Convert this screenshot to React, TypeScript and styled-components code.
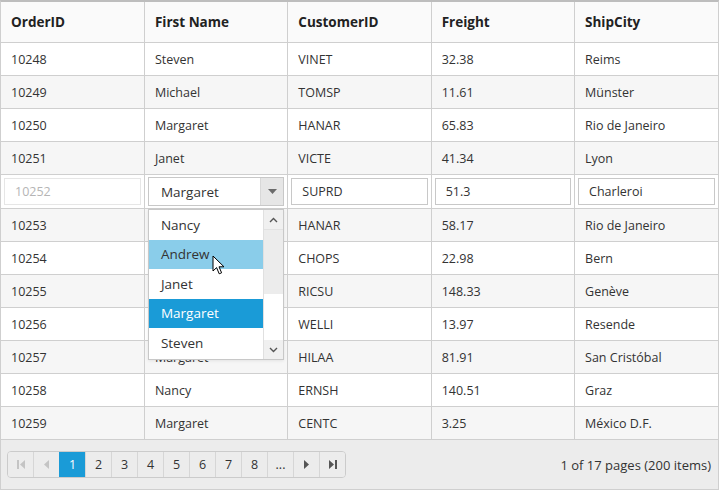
import React from "react";
import styled, { createGlobalStyle } from "styled-components";

interface Order {
  id: number;
  name: string;
  customer: string;
  freight: string;
  city: string;
}

const orders: Order[] = [
  { id: 10248, name: "Steven", customer: "VINET", freight: "32.38", city: "Reims" },
  { id: 10249, name: "Michael", customer: "TOMSP", freight: "11.61", city: "Münster" },
  { id: 10250, name: "Margaret", customer: "HANAR", freight: "65.83", city: "Rio de Janeiro" },
  { id: 10251, name: "Janet", customer: "VICTE", freight: "41.34", city: "Lyon" },
  { id: 10252, name: "Margaret", customer: "SUPRD", freight: "51.3", city: "Charleroi" },
  { id: 10253, name: "Janet", customer: "HANAR", freight: "58.17", city: "Rio de Janeiro" },
  { id: 10254, name: "Steven", customer: "CHOPS", freight: "22.98", city: "Bern" },
  { id: 10255, name: "Anne", customer: "RICSU", freight: "148.33", city: "Genève" },
  { id: 10256, name: "Janet", customer: "WELLI", freight: "13.97", city: "Resende" },
  { id: 10257, name: "Margaret", customer: "HILAA", freight: "81.91", city: "San Cristóbal" },
  { id: 10258, name: "Nancy", customer: "ERNSH", freight: "140.51", city: "Graz" },
  { id: 10259, name: "Margaret", customer: "CENTC", freight: "3.25", city: "México D.F." },
];

const employees = ["Nancy", "Andrew", "Janet", "Margaret", "Steven"];
const EDIT_ID = 10252;

const GlobalStyle = createGlobalStyle`
  body {
    margin: 0;
    background: #fff;
    font-family: "Open Sans", "Noto Sans", sans-serif;
  }
`;

export default function App() {
  return (
    <>
      <GlobalStyle />
      <Grid>
        <Table>
          <thead>
            <tr>
              <Th>OrderID</Th>
              <Th>First Name</Th>
              <Th>CustomerID</Th>
              <Th>Freight</Th>
              <Th>ShipCity</Th>
            </tr>
          </thead>
          <tbody>
            {orders.map((o, i) =>
              o.id === EDIT_ID ? (
                <EditRow key={o.id}>
                  <EditCell>
                    <TextBox $disabled>{o.id}</TextBox>
                  </EditCell>
                  <EditCell>
                    <DropWrap>
                      <DropBox>
                        <DropText>{o.name}</DropText>
                        <DropArrow>
                          <svg width="9" height="5" viewBox="0 0 9 5">
                            <path d="M0 0h9L4.5 5z" fill="#6b6b6b" />
                          </svg>
                        </DropArrow>
                      </DropBox>
                      <Popup>
                        <List>
                          {employees.map((e) => (
                            <Item
                              key={e}
                              $hover={e === "Andrew"}
                              $selected={e === "Margaret"}
                            >
                              {e}
                            </Item>
                          ))}
                        </List>
                        <ScrollBar>
                          <ScrollBtn>
                            <svg width="9" height="6" viewBox="0 0 9 6">
                              <path d="M1 5l3.5-3.5L8 5" stroke="#555" strokeWidth="1.4" fill="none" />
                            </svg>
                          </ScrollBtn>
                          <Thumb />
                          <Track />
                          <ScrollBtn>
                            <svg width="9" height="6" viewBox="0 0 9 6">
                              <path d="M1 1l3.5 3.5L8 1" stroke="#555" strokeWidth="1.4" fill="none" />
                            </svg>
                          </ScrollBtn>
                        </ScrollBar>
                        <Cursor width="14" height="21" viewBox="0 0 14 21">
                          <path
                            d="M1 1v15l3.6-3.4 2.6 6.2 2.4-1-2.6-6h5z"
                            fill="#fff"
                            stroke="#000"
                            strokeWidth="1"
                            strokeLinejoin="round"
                          />
                        </Cursor>
                      </Popup>
                    </DropWrap>
                  </EditCell>
                  <EditCell>
                    <TextBox>{o.customer}</TextBox>
                  </EditCell>
                  <EditCell>
                    <TextBox>{o.freight}</TextBox>
                  </EditCell>
                  <EditCell>
                    <TextBox>{o.city}</TextBox>
                  </EditCell>
                </EditRow>
              ) : (
                <Row key={o.id} $alt={i % 2 === 1}>
                  <Td>{o.id}</Td>
                  <Td>{o.name}</Td>
                  <Td>{o.customer}</Td>
                  <Td>{o.freight}</Td>
                  <Td>{o.city}</Td>
                </Row>
              )
            )}
          </tbody>
        </Table>
        <PagerBar>
          <Pager>
            <PageBtn $muted>
              <svg width="8" height="9" viewBox="0 0 8 9">
                <path d="M0 0h2v9H0zM8 0v9L3 4.5z" fill="#c4c4c4" />
              </svg>
            </PageBtn>
            <PageBtn $muted>
              <svg width="5" height="9" viewBox="0 0 5 9">
                <path d="M5 0v9L0 4.5z" fill="#c4c4c4" />
              </svg>
            </PageBtn>
            {["1", "2", "3", "4", "5", "6", "7", "8", "..."].map((p) => (
              <PageBtn key={p} $active={p === "1"}>
                {p}
              </PageBtn>
            ))}
            <PageBtn>
              <svg width="5" height="9" viewBox="0 0 5 9">
                <path d="M0 0v9l5-4.5z" fill="#555" />
              </svg>
            </PageBtn>
            <PageBtn>
              <svg width="8" height="9" viewBox="0 0 8 9">
                <path d="M0 0v9l5-4.5zM6 0h2v9H6z" fill="#555" />
              </svg>
            </PageBtn>
          </Pager>
          <PageInfo>1 of 17 pages (200 items)</PageInfo>
        </PagerBar>
      </Grid>
    </>
  );
}

const Grid = styled.div`
  width: 719px;
  box-sizing: border-box;
  border: 1px solid #cfcfcf;
  border-top: 2px solid #bdbdbd;
  color: #333;
`;

const Table = styled.table`
  width: 100%;
  table-layout: fixed;
  border-collapse: collapse;
`;

const Th = styled.th`
  height: 40px;
  padding: 0 10px;
  text-align: left;
  font-size: 13.5px;
  font-weight: 700;
  color: #222;
  background: #fafafa;
  border-left: 1px solid #cfcfcf;
  border-bottom: 1px solid #cfcfcf;
  &:first-child {
    border-left: none;
  }
`;

const Row = styled.tr<{ $alt?: boolean }>`
  background: ${(p) => (p.$alt ? "#f6f6f6" : "#fff")};
`;

const Td = styled.td`
  height: 32px;
  padding: 0 10px;
  font-size: 12.5px;
  color: #333;
  border-left: 1px solid #cfcfcf;
  border-bottom: 1px solid #cfcfcf;
  white-space: nowrap;
  overflow: hidden;
  &:first-child {
    border-left: none;
  }
`;

const EditRow = styled.tr`
  background: #fff;
`;

const EditCell = styled.td`
  height: 33px;
  padding: 0 3px;
  border-left: 1px solid #cfcfcf;
  border-bottom: 1px solid #cfcfcf;
  &:first-child {
    border-left: none;
  }
`;

const TextBox = styled.div<{ $disabled?: boolean }>`
  height: 27px;
  box-sizing: border-box;
  border: 1px solid ${(p) => (p.$disabled ? "#e6e6e6" : "#c8c8c8")};
  display: flex;
  align-items: center;
  padding: 0 10px;
  font-size: 12.5px;
  color: ${(p) => (p.$disabled ? "#b5b5b5" : "#333")};
  background: #fff;
`;

const DropWrap = styled.div`
  position: relative;
`;

const DropBox = styled.div`
  height: 29px;
  box-sizing: border-box;
  border: 1px solid #c8c8c8;
  display: flex;
  align-items: stretch;
  background: #fff;
`;

const DropText = styled.div`
  flex: 1;
  display: flex;
  align-items: center;
  padding: 0 12px;
  font-size: 13.5px;
  color: #333;
`;

const DropArrow = styled.div`
  width: 22px;
  background: #e6e6e6;
  border-left: 1px solid #d8d8d8;
  display: flex;
  align-items: center;
  justify-content: center;
`;

const Popup = styled.div`
  position: absolute;
  top: 32px;
  left: 0;
  right: 0;
  height: 151px;
  box-sizing: border-box;
  border: 1px solid #c8c8c8;
  background: #fff;
  display: flex;
  z-index: 5;
  box-shadow: 0 1px 3px rgba(0, 0, 0, 0.08);
`;

const List = styled.div`
  flex: 1;
  display: flex;
  flex-direction: column;
`;

const Item = styled.div<{ $hover?: boolean; $selected?: boolean }>`
  height: 29.5px;
  display: flex;
  align-items: center;
  padding: 0 12px;
  font-size: 13.5px;
  color: ${(p) => (p.$selected ? "#fff" : "#333")};
  background: ${(p) =>
    p.$selected ? "#1a9bd7" : p.$hover ? "#8acdea" : "transparent"};
`;

const ScrollBar = styled.div`
  width: 19px;
  background: #fff;
  border-left: 1px solid #e0e0e0;
  display: flex;
  flex-direction: column;
`;

const ScrollBtn = styled.div`
  height: 19px;
  flex: none;
  background: #f0f0f0;
  display: flex;
  align-items: center;
  justify-content: center;
`;

const Thumb = styled.div`
  height: 64px;
  flex: none;
  background: #ececec;
  border-top: 1px solid #e2e2e2;
`;

const Track = styled.div`
  flex: 1;
  background: #fff;
`;

const Cursor = styled.svg`
  position: absolute;
  left: 63px;
  top: 45px;
`;

const PagerBar = styled.div`
  height: 49px;
  background: #ececec;
  display: flex;
  align-items: center;
  justify-content: space-between;
  padding: 0 6px;
`;

const Pager = styled.div`
  display: flex;
  height: 27px;
  box-sizing: border-box;
  border: 1px solid #cbcbcb;
  border-radius: 4px;
  overflow: hidden;
`;

const PageBtn = styled.div<{ $active?: boolean; $muted?: boolean }>`
  width: 25px;
  display: flex;
  align-items: center;
  justify-content: center;
  font-size: 12.5px;
  color: ${(p) => (p.$active ? "#fff" : "#333")};
  background: ${(p) => (p.$active ? "#1a9bd7" : "#ececec")};
  border-left: 1px solid ${(p) => (p.$active ? "#1a9bd7" : "#d6d6d6")};
  &:first-child {
    border-left: none;
  }
`;

const PageInfo = styled.div`
  font-size: 13px;
  color: #333;
  padding-right: 1px;
`;
